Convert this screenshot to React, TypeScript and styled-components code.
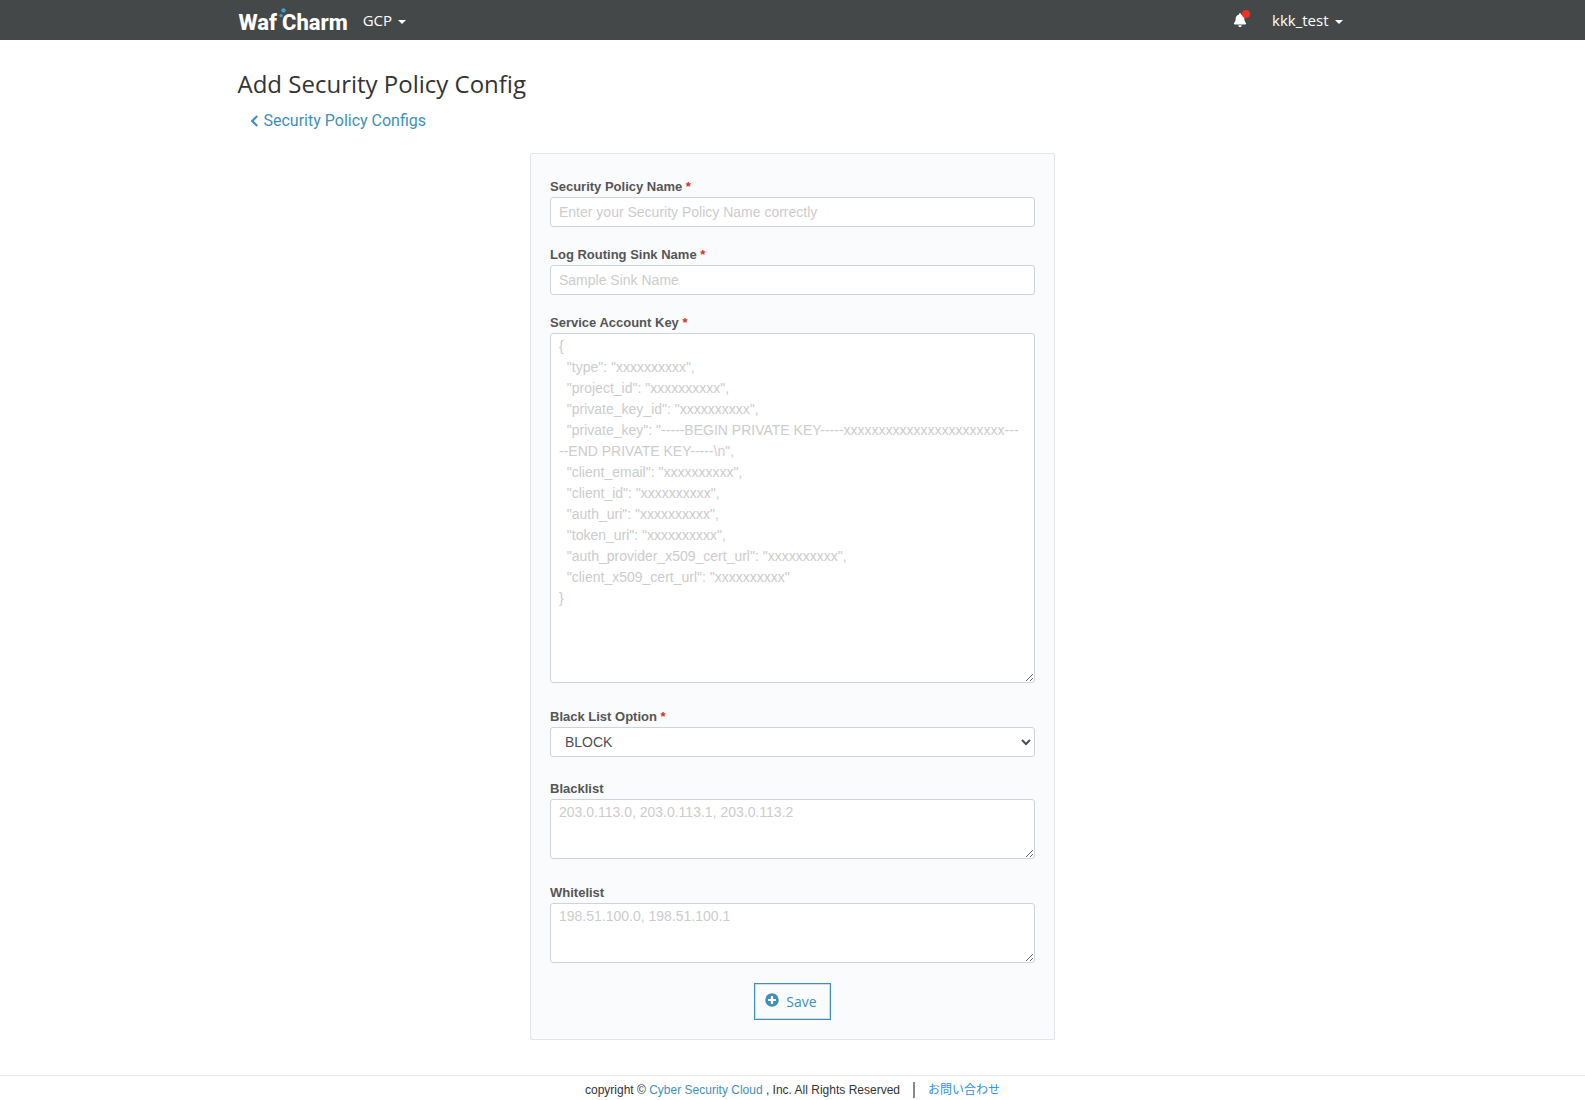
import React from "react";
import styled, { createGlobalStyle } from "styled-components";
import { FaBell } from "react-icons/fa6";

const sans = `"Liberation Sans", Arial, "Noto Sans CJK JP", sans-serif`;
const humanist = `"Open Sans", "Noto Sans", sans-serif`;
const blue = "#428fb9";

const GlobalStyle = createGlobalStyle`
  *, *::before, *::after { box-sizing: border-box; }
  body { margin: 0; background: #fff; color: #333; font-family: ${sans}; }
  a { text-decoration: none; }
`;

const Page = styled.div`
  display: flex;
  flex-direction: column;
  min-height: 100vh;
`;

const Container = styled.div`
  width: 100%;
  max-width: 1110px;
  margin: 0 auto;
`;

const Header = styled.header`
  background: #454849;
`;

const Bar = styled(Container)`
  display: flex;
  align-items: center;
  height: 40px;
`;

const Logo = styled.a`
  position: relative;
  display: flex;
  gap: 5px;
  margin: 6px 15px 0 1px;
  color: #fff;
  font: 800 22px/32px Roboto, sans-serif;
`;

const LogoDots = styled.svg`
  position: absolute;
  left: 38px;
  top: 0;
`;

const MenuButton = styled.button`
  display: flex;
  align-items: center;
  gap: 6px;
  padding: 0;
  border: 0;
  background: none;
  color: #fff;
  font: 500 15px/24px ${humanist};

  &::after {
    content: "";
    margin-top: 3px;
    border: 4px solid transparent;
    border-top-color: #fff;
    border-bottom: 0;
  }
`;

const Account = styled.div`
  display: flex;
  align-items: center;
  gap: 25px;
  margin-left: auto;
  margin-right: 5px;
`;

const BellButton = styled.button`
  position: relative;
  display: flex;
  padding: 0;
  border: 0;
  background: none;
  color: #fff;
`;

const Dot = styled.span`
  position: absolute;
  top: -3px;
  right: -3px;
  width: 8px;
  height: 8px;
  border-radius: 50%;
  background: #ee3124;
`;

const Main = styled(Container).attrs({ as: "main" })`
  flex: 1;
  padding: 28px 0 35px;
`;

const Title = styled.h1`
  margin: 0;
  color: #333;
  font: 400 24px/32px ${humanist};
`;

const BackLink = styled.a`
  display: inline-flex;
  align-items: center;
  gap: 5px;
  margin: 9px 0 0 12px;
  color: ${blue};
  font: 16px/24px Roboto, sans-serif;
`;

const Card = styled.form`
  width: 100%;
  max-width: 525px;
  margin: 20px auto 0;
  padding: 23px 19px 19px;
  border: 1px solid #e1e4e8;
  border-radius: 2px;
  background: #fafbfd;
`;

const Field = styled.div<{ $gap: number }>`
  display: flex;
  flex-direction: column;
  margin-bottom: ${(p) => p.$gap}px;
`;

const Label = styled.label`
  color: #555;
  font: bold 13px/20px ${sans};
`;

const Star = styled.span`
  color: #dc2d22;
`;

const control = `
  display: block;
  width: 100%;
  margin: 0;
  border: 1px solid #ced4da;
  border-radius: 3px;
  background: #fff;
  color: #495057;
  font: 14px/21px ${sans};
  outline: 0;
  &::placeholder { color: #ccc; opacity: 1; }
`;

const Input = styled.input`
  ${control}
  height: 30px;
  padding: 0 8px;
`;

const Select = styled.select`
  ${control}
  height: 30px;
  padding: 0 0 0 10px;
`;

const TextArea = styled.textarea<{ $height: number }>`
  ${control}
  height: ${(p) => p.$height}px;
  padding: 2px 12px 2px 8px;
  resize: vertical;
  word-break: break-all;
`;

const SaveButton = styled.button`
  display: flex;
  align-items: center;
  gap: 7px;
  height: 37px;
  margin: 0 auto;
  padding: 0 13px 0 10px;
  border: 1px solid ${blue};
  box-shadow: inset 0 0 0 1px #d3dbe0;
  background: #fafbfd;
  color: ${blue};
  font: 14px/20px ${humanist};

  svg { margin-bottom: 4px; }
`;

const Footer = styled.footer`
  display: flex;
  justify-content: center;
  align-items: center;
  height: 25px;
  padding-top: 4px;
  border-top: 1px solid #e7e9eb;
  color: #333;
  font: 12px/20px ${sans};
`;

const FooterLink = styled.a<{ $bright?: boolean }>`
  color: ${(p) => (p.$bright ? "#2f8fec" : blue)};
`;

const Divider = styled.span`
  width: 2px;
  height: 16px;
  margin: 0 13px;
  background: #888;
`;

const keySample = `{
  "type": "xxxxxxxxxx",
  "project_id": "xxxxxxxxxx",
  "private_key_id": "xxxxxxxxxx",
  "private_key": "-----BEGIN PRIVATE KEY-----xxxxxxxxxxxxxxxxxxxxxxx-----END PRIVATE KEY-----\\n",
  "client_email": "xxxxxxxxxx",
  "client_id": "xxxxxxxxxx",
  "auth_uri": "xxxxxxxxxx",
  "token_uri": "xxxxxxxxxx",
  "auth_provider_x509_cert_url": "xxxxxxxxxx",
  "client_x509_cert_url": "xxxxxxxxxx"
}`;

function FieldRow(props: {
  id: string;
  label: string;
  required?: boolean;
  gap: number;
  children: React.ReactNode;
}) {
  return (
    <Field $gap={props.gap}>
      <Label htmlFor={props.id}>
        {props.label}
        {props.required && <Star> *</Star>}
      </Label>
      {props.children}
    </Field>
  );
}

export default function App() {
  return (
    <Page>
      <GlobalStyle />
      <Header>
        <Bar>
          <Logo href="#">
            <span>Waf</span>
            <span>Charm</span>
            <LogoDots width="10" height="14" viewBox="0 0 10 14" aria-hidden="true">
              <circle cx="6.5" cy="3.4" r="2.2" fill="#3f9fc8" />
              <circle cx="4" cy="8.6" r="1.7" fill="#3f9fc8" />
            </LogoDots>
          </Logo>
          <MenuButton type="button">GCP</MenuButton>
          <Account>
            <BellButton type="button" aria-label="Notifications">
              <FaBell size={14} />
              <Dot />
            </BellButton>
            <MenuButton type="button">kkk_test</MenuButton>
          </Account>
        </Bar>
      </Header>

      <Main>
        <Title>Add Security Policy Config</Title>
        <BackLink href="#">
          <svg width="9" height="12" viewBox="0 0 9 12" aria-hidden="true">
            <path d="M7.2 1 2.2 6l5 5" fill="none" stroke="currentColor" strokeWidth="2.2" />
          </svg>
          Security Policy Configs
        </BackLink>

        <Card onSubmit={(e) => e.preventDefault()}>
          <FieldRow id="policy" label="Security Policy Name" required gap={18}>
            <Input id="policy" placeholder="Enter your Security Policy Name correctly" />
          </FieldRow>
          <FieldRow id="sink" label="Log Routing Sink Name" required gap={18}>
            <Input id="sink" placeholder="Sample Sink Name" />
          </FieldRow>
          <FieldRow id="key" label="Service Account Key" required gap={24}>
            <TextArea id="key" $height={350} placeholder={keySample} />
          </FieldRow>
          <FieldRow id="option" label="Black List Option" required gap={22}>
            <Select id="option" defaultValue="BLOCK">
              <option>BLOCK</option>
            </Select>
          </FieldRow>
          <FieldRow id="blacklist" label="Blacklist" gap={24}>
            <TextArea id="blacklist" $height={60} placeholder="203.0.113.0, 203.0.113.1, 203.0.113.2" />
          </FieldRow>
          <FieldRow id="whitelist" label="Whitelist" gap={20}>
            <TextArea id="whitelist" $height={60} placeholder="198.51.100.0, 198.51.100.1" />
          </FieldRow>
          <SaveButton type="submit">
            <svg width="14" height="14" viewBox="0 0 14 14" aria-hidden="true">
              <circle cx="7" cy="7" r="6.8" fill="currentColor" />
              <path d="M7 3v8M3 7h8" stroke="#fff" strokeWidth="2.2" />
            </svg>
            Save
          </SaveButton>
        </Card>
      </Main>

      <Footer>
        <span>
          copyright © <FooterLink href="#">Cyber Security Cloud</FooterLink> , Inc. All Rights Reserved
        </span>
        <Divider />
        <FooterLink href="#" $bright>
          お問い合わせ
        </FooterLink>
      </Footer>
    </Page>
  );
}
